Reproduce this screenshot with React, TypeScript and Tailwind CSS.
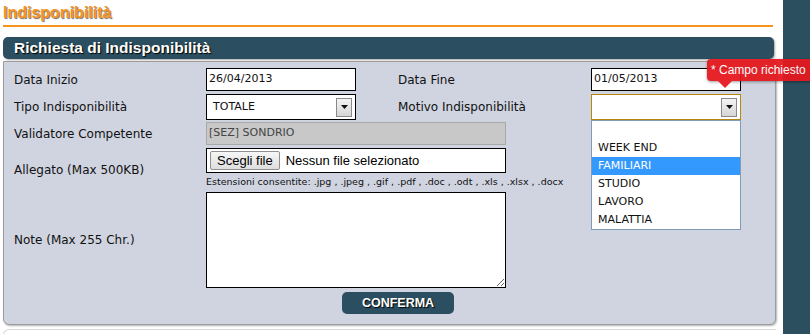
import React from 'react';

const label = 'text-[12px] text-[#111]';
const font = { fontFamily: '"DejaVu Sans", Verdana, sans-serif' };
const arial = { fontFamily: '"Liberation Sans", Arial, sans-serif' };

function SelectArrow() {
  return (
    <div className="w-[16px] h-[19px] border border-[#8a8a8a] bg-gradient-to-b from-[#f4f4f4] to-[#d6d6d6] flex items-center justify-center">
      <svg width="7" height="4" viewBox="0 0 7 4">
        <path d="M0 0h7L3.5 4z" fill="#111" />
      </svg>
    </div>
  );
}

const options = ['', 'WEEK END', 'FAMILIARI', 'STUDIO', 'LAVORO', 'MALATTIA'];

export default function App() {
  return (
    <div
      className="relative w-[810px] h-[334px] overflow-hidden flex bg-white"
      style={font}
    >
      <div className="w-[783px] pl-[3px]">
        <div className="h-[25px] flex items-center">
          <span
            className="text-[16px] font-bold text-[#f7941d] leading-none"
            style={{ ...arial, textShadow: '1px 1px 1px #6b6b6b' }}
          >
            Indisponibilità
          </span>
        </div>
        <div className="w-[770px] h-[2px] bg-[#f7941d]" />

        <div className="mt-[10px] w-[771px] h-[22px] rounded-[5px] bg-[#2b4f61] flex items-center pl-[11px] shadow-[1px_1px_2px_rgba(0,0,0,0.35)]">
          <span
            className="text-[15.5px] font-bold text-white"
            style={{ ...arial, textShadow: '1px 1px 1px #000' }}
          >
            Richiesta di Indisponibilità
          </span>
        </div>

        <div className="mt-[2px] w-[773px] h-[264px] bg-[#d0d4e0] border border-[#9c9c9c] rounded-b-[6px] shadow-[1px_1px_2px_rgba(0,0,0,0.3)] pl-[10px] pt-[6px]">
          {/* row 1 */}
          <div className="flex items-center h-[23px]">
            <div className={`w-[192px] ${label}`}>Data Inizio</div>
            <div className="w-[150px] h-[23px] bg-white border border-black flex items-center pl-[2px] text-[11px] text-[#111]">
              26/04/2013
            </div>
            <div className={`ml-[42px] w-[193px] ${label}`}>Data Fine</div>
            <div className="w-[150px] h-[23px] bg-white border border-black flex items-center pl-[2px] text-[11px] text-[#111]">
              01/05/2013
            </div>
          </div>

          {/* row 2 */}
          <div className="flex items-center h-[26px] mt-[3px]">
            <div className={`w-[192px] ${label}`}>Tipo Indisponibilità</div>
            <div className="w-[150px] h-[26px] bg-white border border-black flex items-center justify-between pl-[6px] pr-[3px] text-[11px] text-[#111]">
              <span>TOTALE</span>
              <SelectArrow />
            </div>
            <div className={`ml-[42px] w-[193px] ${label}`}>Motivo Indisponibilità</div>
            <div className="relative w-[150px] h-[26px]">
              <div className="w-full h-full bg-white border border-[#b8860b] flex items-center justify-end pr-[3px]">
                <SelectArrow />
              </div>
              <div className="absolute left-0 top-full w-[150px] h-[110px] bg-white border border-[#7f9db9] z-10">
                {options.map((o) => (
                  <div
                    key={o || 'blank'}
                    className={`h-[18px] flex items-center pl-[6px] text-[11px] ${
                      o === 'FAMILIARI' ? 'bg-[#3399ff] text-white' : 'text-[#111]'
                    }`}
                  >
                    {o}
                  </div>
                ))}
              </div>
            </div>
          </div>

          {/* row 3 */}
          <div className="flex items-center h-[23px] mt-[2px]">
            <div className={`w-[192px] ${label}`}>Validatore Competente</div>
            <div className="w-[300px] h-[23px] bg-[#c8c8c8] border border-[#a8a8a8] flex items-center pl-[2px] text-[11px] text-[#444]">
              [SEZ] SONDRIO
            </div>
          </div>

          {/* row 4 */}
          <div className="flex items-center mt-[3px]">
            <div className={`w-[192px] ${label}`}>Allegato (Max 500KB)</div>
            <div>
              <div className="w-[300px] h-[25px] bg-white border border-black flex items-center pl-[3px] gap-[6px]">
                <div
                  className="h-[19px] px-[6px] border border-[#8f8f8f] rounded-[2px] bg-gradient-to-b from-[#f6f6f6] to-[#dedede] flex items-center text-[13px] text-black"
                  style={arial}
                >
                  Scegli file
                </div>
                <span className="text-[13px] text-black" style={arial}>
                  Nessun file selezionato
                </span>
              </div>
              <div className="h-[19px] flex items-center text-[9.5px] text-[#111]">
                Estensioni consentite: .jpg , .jpeg , .gif , .pdf , .doc , .odt , .xls , .xlsx , .docx
              </div>
            </div>
          </div>

          {/* row 5 */}
          <div className="flex items-center">
            <div className={`w-[192px] ${label}`}>Note (Max 255 Chr.)</div>
            <textarea className="w-[300px] h-[96px] bg-white border border-black outline-none resize" />
          </div>

          <div className="flex mt-[4px]">
            <div className="w-[192px]" />
            <button
              className="ml-[136px] w-[112px] h-[22px] rounded-[5px] bg-[#2b4f61] text-white font-bold text-[12.5px]"
              style={{ ...arial, textShadow: '1px 1px 1px #000' }}
            >
              CONFERMA
            </button>
          </div>
        </div>

        <div className="mt-[4px] w-[773px] h-[20px] border-t border-l border-[#d8d8d8] rounded-tl-[6px]" />
      </div>

      <div className="flex-1 bg-[#2b4f5f]" />

      {/* tooltip */}
      <div className="absolute left-[707px] top-[59px] z-20 opacity-95">
        <div
          className="w-[110px] h-[22px] bg-[#e5191f] rounded-[4px] flex items-center pl-[4px] text-[12px] text-white shadow-[0_1px_3px_rgba(0,0,0,0.4)]"
          style={arial}
        >
          * Campo richiesto
        </div>
        <svg className="ml-[11px]" width="14" height="7" viewBox="0 0 14 7">
          <path d="M0 0h14L7 7z" fill="#e5191f" />
        </svg>
      </div>
    </div>
  );
}
